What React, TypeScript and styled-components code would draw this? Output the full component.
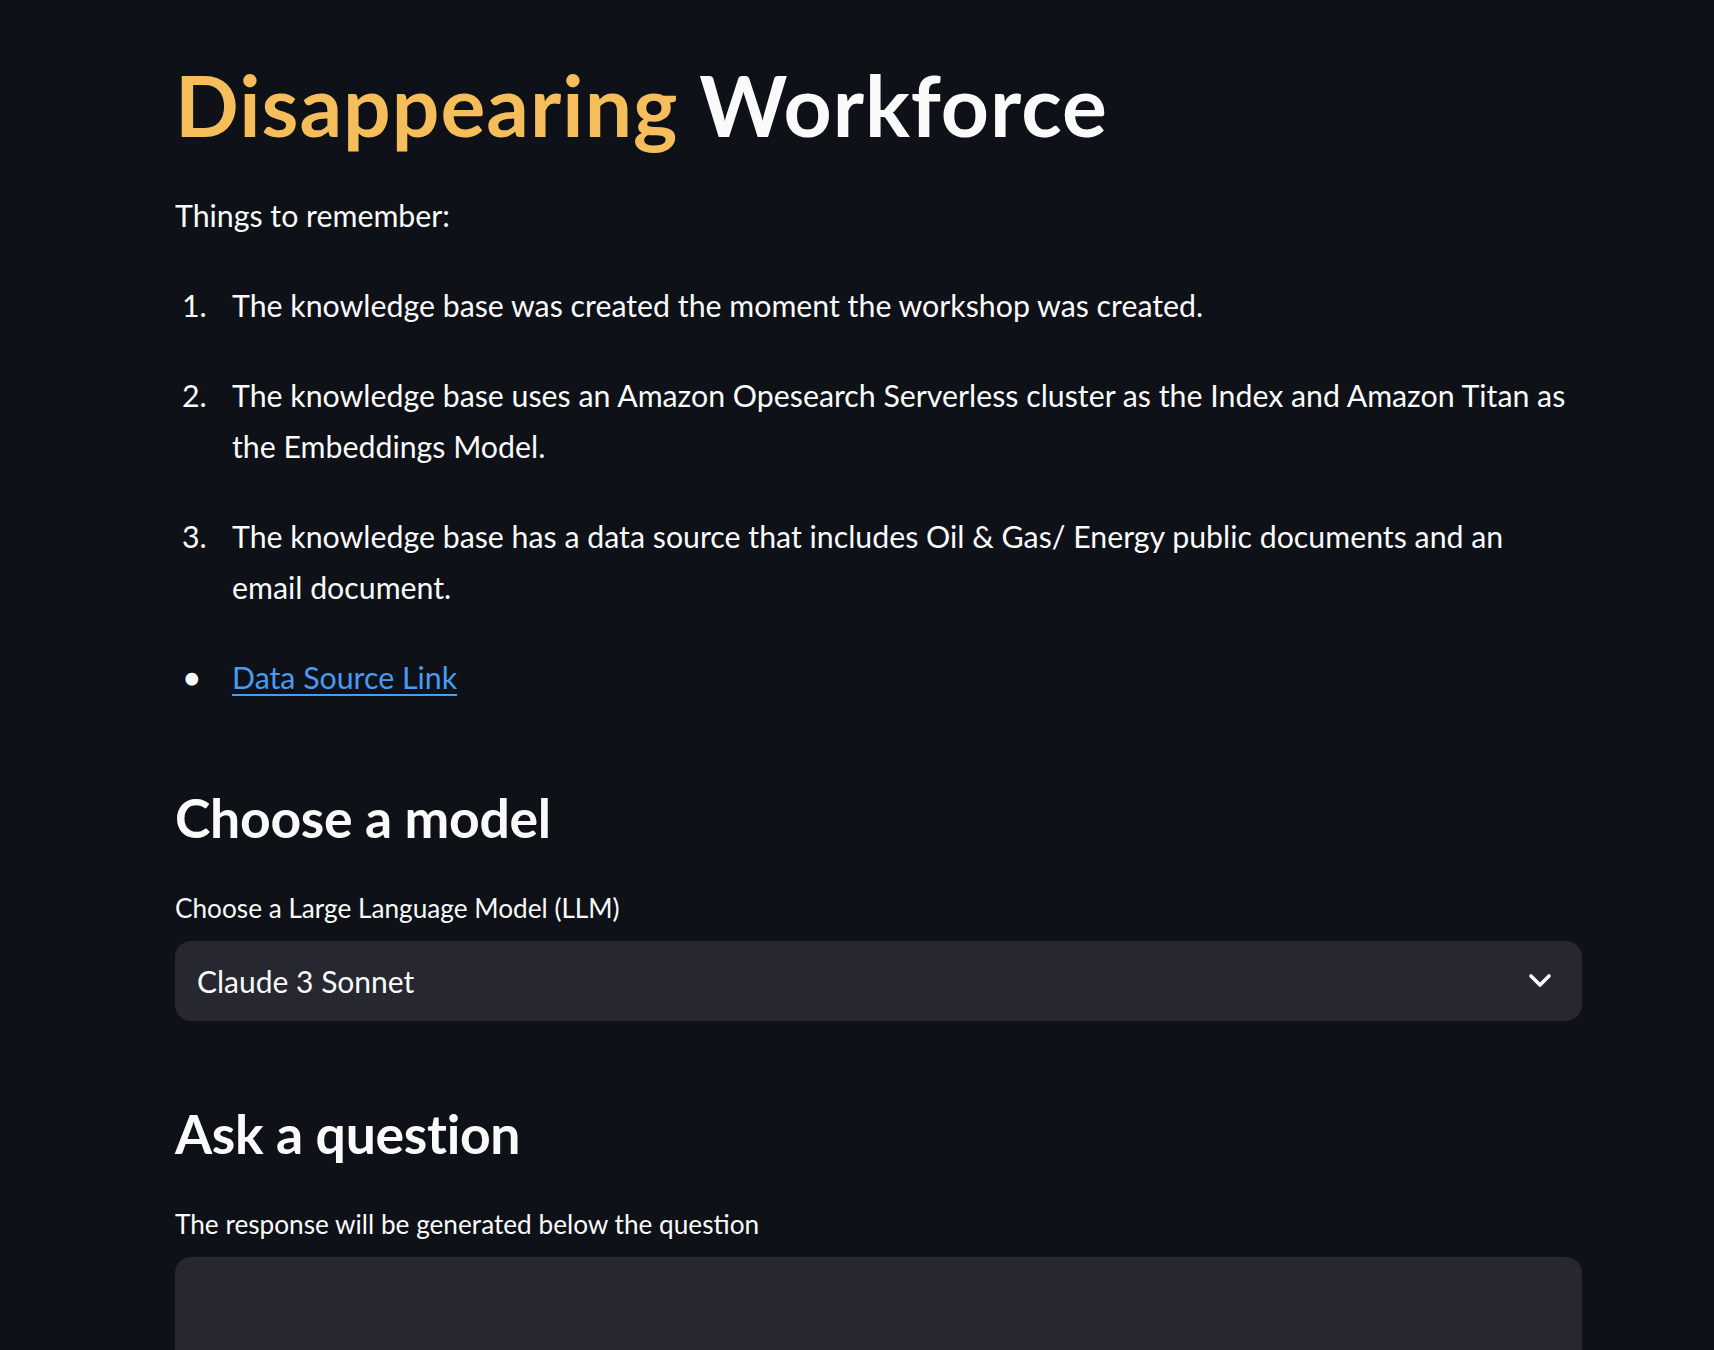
import { createGlobalStyle } from "styled-components";
import styled from "styled-components";

const GlobalStyle = createGlobalStyle`
  html, body {
    margin: 0;
    padding: 0;
    background: #0e1117;
  }
  * { box-sizing: border-box; }
`;

const Page = styled.div`
  height: 1350px;
  overflow: hidden;
  background: #0e1117;
  color: #fafafa;
  font-family: "Lato", "Noto Sans", sans-serif;
  padding: 55px 0 0 175px;
`;

const Main = styled.main`
  width: 1407px;
  display: flex;
  flex-direction: column;
`;

const Title = styled.h1`
  margin: 0;
  font-size: 84px;
  font-weight: 700;
  line-height: 1.2;
  letter-spacing: 1px;
  color: #fafafa;
`;

const Accent = styled.span`
  color: #f6be5a;
`;

const Text = styled.p`
  margin: 34px 0 0;
  font-size: 30.3px;
  line-height: 51px;
`;

const List = styled.div`
  display: flex;
  flex-direction: column;
  gap: 39px;
  margin-top: 39px;
`;

const Item = styled.div`
  display: flex;
  font-size: 30.3px;
  line-height: 51px;
`;

const Marker = styled.span<{ $bullet?: boolean }>`
  flex: 0 0 57px;
  padding-left: ${(p) => (p.$bullet ? "9px" : "7px")};
  font-size: ${(p) => (p.$bullet ? "26px" : "30.3px")};
`;

const ItemText = styled.span`
  flex: 1;
  padding-right: 10px;
`;

const Link = styled.a`
  color: #4a9af2;
  text-decoration: underline;
  text-decoration-thickness: 2px;
  text-underline-offset: 5px;
`;

const Heading = styled.h3<{ $top: number }>`
  margin: ${(p) => p.$top}px 0 0;
  font-size: 53.5px;
  font-weight: 700;
  line-height: 1.2;
  letter-spacing: -0.3px;
`;

const Label = styled.label`
  display: block;
  margin-top: 41px;
  font-size: 26.2px;
  line-height: 36px;
`;

const Select = styled.div`
  margin-top: 15px;
  height: 80px;
  border-radius: 16px;
  background: #262730;
  display: flex;
  align-items: center;
  justify-content: space-between;
  padding: 0 30px 0 22px;
  font-size: 30px;
`;

const TextArea = styled.div`
  margin-top: 15px;
  height: 220px;
  border-radius: 16px;
  background: #262730;
`;

const Chevron = () => (
  <svg width="24" height="16" viewBox="0 0 24 16" fill="none">
    <path d="M3 3 L12 12 L21 3" stroke="#fafafa" strokeWidth="3.6" strokeLinecap="round" strokeLinejoin="round" />
  </svg>
);

export default function App() {
  return (
    <>
      <GlobalStyle />
      <Page>
        <Main>
          <Title>
            <Accent>Disappearing</Accent> Workforce
          </Title>
          <Text>Things to remember:</Text>
          <List>
            <Item>
              <Marker>1.</Marker>
              <ItemText>The knowledge base was created the moment the workshop was created.</ItemText>
            </Item>
            <Item>
              <Marker>2.</Marker>
              <ItemText>
                The knowledge base uses an Amazon Opesearch Serverless cluster as the Index and Amazon Titan as
                the Embeddings Model.
              </ItemText>
            </Item>
            <Item>
              <Marker>3.</Marker>
              <ItemText>
                The knowledge base has a data source that includes Oil &amp; Gas/ Energy public documents and an
                email document.
              </ItemText>
            </Item>
            <Item>
              <Marker $bullet>●</Marker>
              <ItemText>
                <Link href="#">Data Source Link</Link>
              </ItemText>
            </Item>
          </List>
          <Heading $top={82}>Choose a model</Heading>
          <Label>Choose a Large Language Model (LLM)</Label>
          <Select>
            <span>Claude 3 Sonnet</span>
            <Chevron />
          </Select>
          <Heading $top={80}>Ask a question</Heading>
          <Label>The response will be generated below the question</Label>
          <TextArea />
        </Main>
      </Page>
    </>
  );
}
